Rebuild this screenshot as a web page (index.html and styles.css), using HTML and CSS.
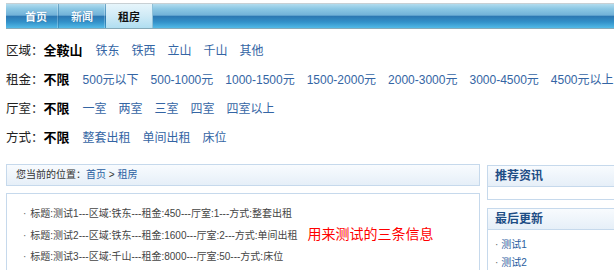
FILE: index.html
```html
<!DOCTYPE html>
<html lang="zh">
<head>
<meta charset="utf-8">
<title>租房</title>
<link rel="stylesheet" href="styles.css">
</head>
<body>
<div class="page">
  <div class="nav">
    <a class="tab first" href="#">首页</a>
    <a class="tab" href="#">新闻</a>
    <a class="tab active" href="#">租房</a>
  </div>

  <div class="filters">
    <div class="frow"><span class="flabel">区域：</span><b class="fval">全鞍山</b><a href="#">铁东</a><a href="#">铁西</a><a href="#">立山</a><a href="#">千山</a><a href="#">其他</a></div>
    <div class="frow"><span class="flabel">租金：</span><b class="fval">不限</b><a href="#">500元以下</a><a href="#">500-1000元</a><a href="#">1000-1500元</a><a href="#">1500-2000元</a><a href="#">2000-3000元</a><a href="#">3000-4500元</a><a href="#">4500元以上</a></div>
    <div class="frow"><span class="flabel">厅室：</span><b class="fval">不限</b><a href="#">一室</a><a href="#">两室</a><a href="#">三室</a><a href="#">四室</a><a href="#">四室以上</a></div>
    <div class="frow"><span class="flabel">方式：</span><b class="fval">不限</b><a href="#">整套出租</a><a href="#">单间出租</a><a href="#">床位</a></div>
  </div>

  <div class="content">
    <div class="main">
      <div class="crumb">您当前的位置：<a href="#">首页</a> &gt; <a href="#">租房</a></div>
      <div class="listbox">
        <ul class="list">
          <li>标题:测试1---区域:铁东---租金:450---厅室:1---方式:整套出租</li>
          <li>标题:测试2---区域:铁东---租金:1600---厅室:2---方式:单间出租</li>
          <li>标题:测试3---区域:千山---租金:8000---厅室:50---方式:床位</li>
        </ul>
        <div class="note">用来测试的三条信息</div>
      </div>
    </div>
    <div class="side">
      <div class="sbox">
        <div class="shead">推荐资讯</div>
        <div class="sbody empty"></div>
      </div>
      <div class="sbox">
        <div class="shead">最后更新</div>
        <ul class="sbody slist">
          <li><a href="#">测试1</a></li>
          <li><a href="#">测试2</a></li>
        </ul>
      </div>
    </div>
  </div>
</div>
</body>
</html>
```

FILE: styles.css
```css
html, body {
  margin: 0;
  padding: 0;
  overflow: hidden;
  background: #fff;
}
body {
  font-family: "Liberation Sans", "Noto Sans CJK SC", sans-serif;
  color: #333;
}
a { text-decoration: none; }
ul { margin: 0; padding: 0; list-style: none; }

.page {
  width: 720px;
  padding: 0 0 0 6px;
}

/* nav */
.nav {
  margin-top: 3px;
  height: 24px;
  border-top: 1px solid #c8d0d4;
  border-bottom: 1px solid #86a9b8;
  background: linear-gradient(to bottom, #b2dcee 0%, #8bc7e4 20%, #72b2d8 46%, #2c78b3 52%, #3391c9 75%, #52bae7 100%);
  display: flex;
}
.tab {
  display: flex;
  align-items: center;
  padding: 0 12px;
  font-size: 11px;
  font-weight: bold;
  color: #f4fbff;
  text-shadow: 0 0 1px rgba(0, 60, 110, .6);
  border-right: 1px solid rgba(40, 110, 160, .45);
  box-shadow: inset -1px 0 0 rgba(255, 255, 255, .25);
}
.tab.first { padding: 0 11px 0 19px; }
.tab.active {
  color: #111;
  text-shadow: none;
  background: linear-gradient(to bottom, #e6f5fb 0%, #cfeaf6 50%, #b0def1 100%);
  border-right: 1px solid #8fc0d8;
  box-shadow: none;
}

/* filters */
.filters { padding-top: 6px; }
.frow {
  height: 29px;
  display: flex;
  align-items: center;
  font-size: 12px;
}
.flabel {
  font-size: 12.5px;
  color: #222;
}
.fval {
  font-size: 13px;
  color: #000;
  margin-right: 13px;
}
.frow a {
  color: #3465a4;
  margin-right: 12px;
  white-space: nowrap;
}

/* content */
.content {
  margin-top: 13px;
  display: flex;
  gap: 7px;
  align-items: flex-start;
}
.main { width: 474px; flex: none; }
.crumb {
  height: 20px;
  border: 1px solid #c6d9ec;
  background: linear-gradient(to bottom, #f8fbfe 0%, #e6eff8 100%);
  font-size: 10px;
  line-height: 20px;
  padding-left: 9px;
  color: #333;
}
.crumb a { color: #2a5ea0; }
.listbox {
  margin-top: 7px;
  border: 1px solid #c6d9ec;
  height: 100px;
  display: flex;
  align-items: flex-start;
}
.list {
  padding: 9px 0 0 16px;
  font-size: 10px;
  color: #444;
}
.list li { line-height: 21.5px; }
.list li::before { content: "·"; margin-right: 4px; color: #666; }
.note {
  margin-top: 29px;
  margin-left: 10px;
  color: #f00;
  font-size: 14px;
}

.side {
  width: 220px;
  flex: none;
  margin-top: 1px;
}
.sbox {
  border: 1px solid #c6d9ec;
  margin-bottom: 8px;
}
.shead {
  height: 20px;
  line-height: 20px;
  padding-left: 7px;
  border-bottom: 1px solid #c6d9ec;
  background: linear-gradient(to bottom, #f8fbfe 0%, #e6eff8 100%);
  font-size: 12px;
  font-weight: bold;
  color: #1d4d85;
}
.sbody.empty { height: 12px; }
.slist { padding: 6px 0 0 7px; font-size: 10px; }
.slist li { line-height: 18px; }
.slist li::before { content: "·"; margin-right: 3px; color: #666; }
.slist a { color: #2a5ea0; }
```
